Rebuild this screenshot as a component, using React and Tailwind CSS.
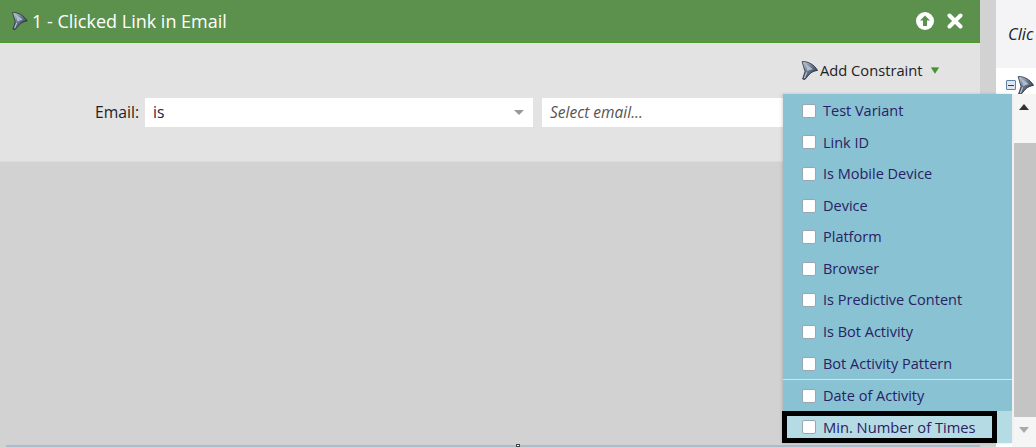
import React from "react";

const font = { fontFamily: '"Open Sans", "Noto Sans", sans-serif' };

const items = [
  "Test Variant",
  "Link ID",
  "Is Mobile Device",
  "Device",
  "Platform",
  "Browser",
  "Is Predictive Content",
  "Is Bot Activity",
  "Bot Activity Pattern",
];

function Funnel({ className }) {
  return (
    <svg viewBox="0 0 17 19" className={className}>
      <defs>
        <linearGradient id="fn" x1="0" y1="0" x2="1" y2="1">
          <stop offset="0%" stopColor="#c9d3df" />
          <stop offset="45%" stopColor="#66758a" />
          <stop offset="100%" stopColor="#1f2734" />
        </linearGradient>
      </defs>
      {/* wide mouth up and to the right, spout down and to the left */}
      <path d="M1.2 0.6 C7 0 13.5 4 16.6 9.4 C13.5 9.8 10.8 11 8.6 13 L3.8 18.6 L1.6 18 L4 10.6 C3.2 7 1.8 3.6 1.2 0.6 Z" fill="url(#fn)" stroke="#232b38" strokeWidth="0.8" />
      <path d="M3.4 2.2 C6 3.6 9 5.6 12 8.2 C9.8 8.6 8 9.2 6.4 10.2 C6 7.4 4.8 4.6 3.4 2.2 Z" fill="#aebccc" />
      <path d="M5.6 11.4 L3.4 17" stroke="#d5dce5" strokeWidth="0.9" />
    </svg>
  );
}

function Checkbox() {
  return <span className="w-[14px] h-[14px] bg-white border border-[#9aa6b2] rounded-[2px] mr-[7px] shrink-0" />;
}

function Option({ label }) {
  return (
    <div className="flex items-center h-[31.6px] shrink-0 pl-[19px]">
      <Checkbox />
      <span className="text-[14.5px] text-[#2a2163]">{label}</span>
    </div>
  );
}

export default function App() {
  return (
    <div className="relative flex w-[1036px] h-[447px] overflow-hidden bg-[#d2d2d2]" style={font}>
      <div className="w-[980px] flex flex-col">
        <div className="h-[43px] bg-[#5b914d] border-b border-[#4c9a2a] flex items-center pl-[11px] pr-[17px] text-white">
          <Funnel className="w-[17px] h-[18px] mr-[4px]" />
          <span className="text-[18px]">1 - Clicked Link in Email</span>
          <div className="ml-auto flex items-center gap-[13px]">
            <svg viewBox="0 0 18 18" className="w-[18px] h-[18px]">
              <circle cx="9" cy="9" r="9" fill="#fff" />
              <path d="M9 3.5 L14 8.6 H11 V14 H7 V8.6 H4 Z" fill="#5b914d" />
            </svg>
            <svg viewBox="0 0 16 16" className="w-[16px] h-[16px]">
              <path d="M2.5 2.5 L13.5 13.5 M13.5 2.5 L2.5 13.5" stroke="#fff" strokeWidth="4" strokeLinecap="round" />
            </svg>
          </div>
        </div>
        <div className="h-[119px] bg-[#e3e3e3] border-b border-[#dadada] flex flex-col">
          <div className="h-[55px] flex items-center pl-[801px]">
            <Funnel className="w-[17px] h-[19px] mr-[2px]" />
            <span className="text-[14.7px] text-[#222]">Add Constraint</span>
            <svg viewBox="0 0 10 8" className="w-[8px] h-[7px] ml-[8px]">
              <path d="M0.5 0.5 H9.5 L5 7.5 Z" fill="#3f9a2c" stroke="#2c6f20" strokeWidth="0.6" />
            </svg>
          </div>
          <div className="flex items-center h-[29px]">
            <span className="w-[139px] text-right text-[15.7px] text-[#222]">Email:</span>
            <div className="ml-[6px] w-[388px] h-full bg-white flex items-center justify-between pl-[8px] pr-[9px]">
              <span className="text-[15.7px] text-[#2a2240]">is</span>
              <span className="w-0 h-0 border-x-[5px] border-x-transparent border-t-[5px] border-t-[#999]" />
            </div>
            <div className="ml-[9px] w-[250px] h-full bg-white flex items-center pl-[8px]">
              <span className="text-[15.5px] italic text-[#555]">Select email...</span>
            </div>
          </div>
        </div>
        <div className="flex-1" />
        <div className="h-[2px] ml-[6px] bg-[#aebbca]" />
      </div>

      <div className="w-[16px] bg-[#d2d2d2]" />

      <div className="flex-1 flex flex-col bg-white">
        <div className="h-[68px] bg-[#f4f4f6] flex items-center pl-[12px]">
          <span className="text-[16.5px] italic text-[#222] whitespace-nowrap">Clic</span>
        </div>
        <div className="flex items-start pl-[10px] pt-[8px]">
          <span className="w-[10px] h-[10px] mt-[4px] border border-[#5f7fa8] bg-[#dde6f0] flex items-center justify-center rounded-[1px]">
            <span className="w-[6px] h-[1px] bg-[#26405f]" />
          </span>
          <Funnel className="w-[17px] h-[19px] ml-[1px]" />
        </div>
      </div>

      {/* scrollbar beside the open menu */}
      <div className="absolute left-[1012px] top-[94px] w-[24px] h-[353px] bg-[#f5f5f5] flex flex-col items-center">
        <span className="mt-[10px] w-0 h-0 border-x-[5px] border-x-transparent border-b-[6px] border-b-[#333]" />
        <div className="mt-[33px] self-stretch h-[274px] ml-[2px] bg-[#c4c4c4]" />
        <span className="mt-[10px] w-0 h-0 border-x-[5px] border-x-transparent border-t-[6px] border-t-[#aaa]" />
      </div>

      {/* constraint menu */}
      <div className="absolute left-[783px] top-[94px] w-[229px] h-[349px] bg-[#89c2d3] shadow-[-1px_0_3px_rgba(0,0,0,0.15)] flex flex-col pt-[1px]">
        {items.map((label) => (
          <Option key={label} label={label} />
        ))}
        <div className="h-[1px] shrink-0 bg-[#cfe6ed]" />
        <Option label="Date of Activity" />
        <div className="flex-1 -mt-[1px] bg-[#b5dbe5]">
          <div className="w-[215px] h-[32px] -ml-[1px] border-[5px] border-black flex items-center bg-[#b5dbe5] pl-[15px]">
            <Checkbox />
            <span className="text-[14.7px] text-[#2a2163]">Min. Number of Times</span>
          </div>
        </div>
      </div>

      <div className="absolute left-[516px] top-[444px] w-[4px] h-[3px] bg-white border border-[#444]" />
    </div>
  );
}
